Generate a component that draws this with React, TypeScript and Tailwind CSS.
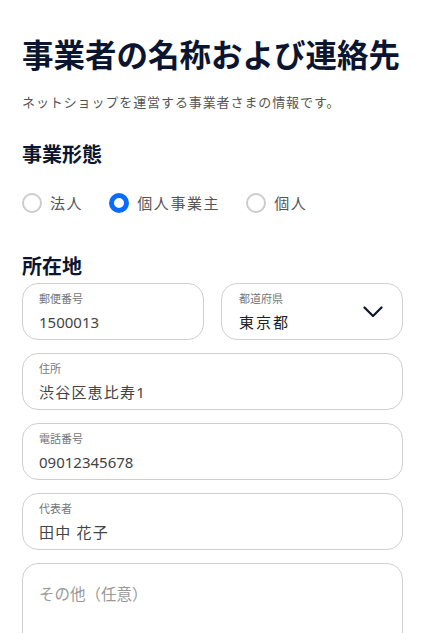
import React from 'react';

const font = { fontFamily: '"Noto Sans", "Noto Sans CJK JP", sans-serif' };

const Radio = ({ label, checked }: { label: string; checked?: boolean }) => (
  <label className="flex items-center gap-[8px]">
    <span
      className={
        checked
          ? 'w-[20px] h-[20px] rounded-full border-[5px] border-[#0a6cff] bg-white'
          : 'w-[20px] h-[20px] rounded-full border-2 border-[#cccccc] bg-white'
      }
    />
    <span className="text-[15px] leading-[20px] tracking-[1.6px] text-[#555]">{label}</span>
  </label>
);

const Field = ({ label, value, wide, className = '' }: { label: string; value: string; wide?: boolean; className?: string }) => (
  <div className={'h-[57px] rounded-[16px] border border-[#cfcfcf] px-[16px] pt-[8px] ' + className}>
    <div className="text-[11px] leading-[14px] text-[#777]">{label}</div>
    <div className={'mt-[6px] text-[15px] leading-[20px] text-[#444] ' + (wide ? 'tracking-[1.2px]' : '')}>{value}</div>
  </div>
);

export default function App() {
  return (
    <div className="bg-white pl-[22px] pr-[20px] pt-[35px] overflow-hidden h-[633px]" style={font}>
      <h1 className="text-[31.5px] leading-[40px] font-bold text-[#0b1530] whitespace-nowrap">事業者の名称および連絡先</h1>
      <p className="mt-[17px] text-[13px] leading-[20px] tracking-[0.9px] text-[#555]">ネットショップを運営する事業者さまの情報です。</p>

      <h2 className="mt-[29px] text-[20px] leading-[28px] font-bold text-[#0b1530]">事業形態</h2>
      <div className="mt-[24px] flex items-center gap-[26px]">
        <Radio label="法人" />
        <Radio label="個人事業主" checked />
        <Radio label="個人" />
      </div>

      <h2 className="mt-[40px] text-[20px] leading-[28px] font-bold text-[#0b1530]">所在地</h2>
      <div className="mt-[2px] flex flex-col gap-[13px]">
        <div className="grid grid-cols-2 gap-[17px]">
          <Field label="郵便番号" value="1500013" />
          <div className="h-[57px] rounded-[16px] border border-[#cfcfcf] pl-[17px] pr-[19px] pt-[8px] flex justify-between">
            <div>
              <div className="text-[11px] leading-[14px] text-[#777]">都道府県</div>
              <div className="mt-[6px] text-[15px] leading-[20px] tracking-[2px] text-[#222]">東京都</div>
            </div>
            <svg width="20" height="12" viewBox="0 0 20 12" className="mt-[14px]" fill="none">
              <path d="M1.5 1.5 L10 10 L18.5 1.5" stroke="#0b1530" strokeWidth="2.2" strokeLinecap="round" strokeLinejoin="round" />
            </svg>
          </div>
        </div>
        <Field label="住所" value="渋谷区恵比寿1" wide />
        <Field label="電話番号" value="09012345678" />
        <Field label="代表者" value="田中 花子" wide />
        <div className="h-[120px] rounded-[16px] border border-[#cfcfcf] px-[16px] pt-[20px]">
          <div className="text-[15.5px] leading-[20px] text-[#999]">その他（任意）</div>
        </div>
      </div>
    </div>
  );
}
